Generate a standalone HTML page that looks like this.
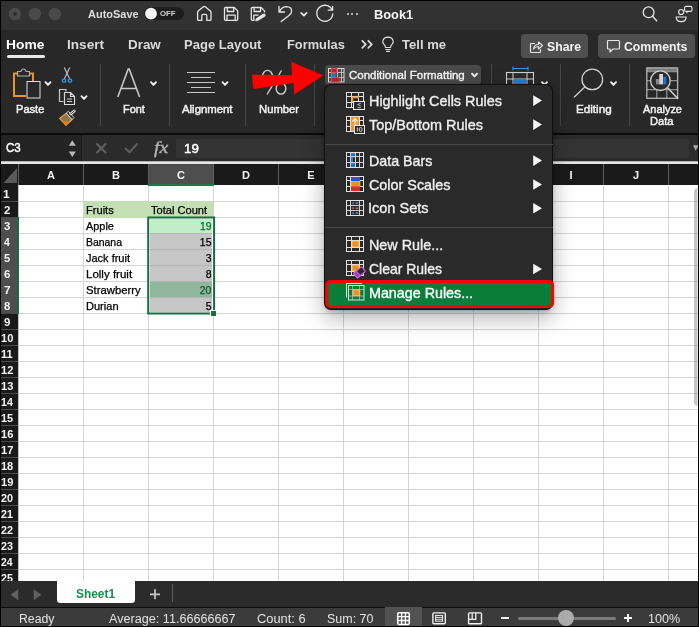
<!DOCTYPE html>
<html>
<head>
<meta charset="utf-8">
<style>
*{box-sizing:border-box;margin:0;padding:0}
html,body{width:699px;height:627px;overflow:hidden;background:#000}
body{font-family:"Liberation Sans",sans-serif;position:relative;font-size:0;line-height:0}
#w{position:absolute;left:0;top:0;width:699px;height:627px;overflow:hidden;background:#000;will-change:transform}
.a{position:absolute;display:block}
.t{position:absolute;white-space:nowrap;line-height:1;display:block}
svg{overflow:visible}
</style>
</head>
<body>
<div id="w">
<div class="a" style="left:1px;top:1px;width:697px;height:625px;background:#282828;"></div>
<div class="a" style="left:1px;top:1px;width:697px;height:29px;background:#323232;"></div>
<svg class="a" style="left:7px;top:6px" width="58" height="16" viewBox="7 6 58 16"><circle cx="15" cy="14" r="6.200" fill="#4a4a4a"/><circle cx="34.900" cy="14" r="6.200" fill="#4a4a4a"/><circle cx="54.900" cy="14" r="6.200" fill="#4a4a4a"/><circle cx="15" cy="14" r="1.800" fill="#2a2a2a"/></svg>
<div class="t" style="left:87.73px;top:8px;line-height:12px;font-size:11px;color:#dedede;font-weight:bold;transform:scaleX(0.9979);transform-origin:0 0;">AutoSave</div>
<svg class="a" style="left:143px;top:6px" width="42" height="15" viewBox="143 6 42 15"><rect x="144.200" y="7.300" width="39.800" height="12.600" rx="6.300" fill="#1d1d1d"/><circle cx="151" cy="13.600" r="5.900" fill="#f2f2f2"/></svg>
<div class="t" style="left:160.19px;top:9px;line-height:9px;font-size:8px;color:#d2d2d2;font-weight:bold;transform:scaleX(0.9740);transform-origin:0 0;">OFF</div>
<svg class="a" style="left:195px;top:4px" width="19" height="19" viewBox="195 4 19 19"><path d="M197.600 12.300 Q197.600 11.600 198.200 11.100 L203.400 6.700 Q204.300 6 205.200 6.700 L210.400 11.100 Q211 11.600 211 12.300 V19.400 Q211 20.400 210 20.400 H206.800 V15.800 Q206.800 14.400 205.400 14.400 H203.200 Q201.800 14.400 201.800 15.800 V20.400 H198.600 Q197.600 20.400 197.600 19.400 Z" fill="none" stroke="#e6e6e6" stroke-width="1.300" stroke-linejoin="round"/></svg>
<svg class="a" style="left:222px;top:5px" width="18" height="18" viewBox="222 5 18 18"><path d="M224.500 8.500 Q224.500 7.500 225.500 7.500 H234.300 L237.700 10.900 V19.300 Q237.700 20.300 236.700 20.300 H225.500 Q224.500 20.300 224.500 19.300 Z M227.300 7.500 V11.500 H233.700 V7.500 M227 20.300 V15.200 H235.200 V20.300" fill="none" stroke="#e6e6e6" stroke-width="1.300" stroke-linejoin="round"/></svg>
<svg class="a" style="left:249px;top:5px" width="20" height="19" viewBox="249 5 20 19"><path d="M256.500 20.300 H252.300 Q251.300 20.300 251.300 19.300 V8.500 Q251.300 7.500 252.300 7.500 H261.100 L264.500 10.900 V12.500 M254.100 7.500 V11.500 H260.500 V7.500 M253.800 20.300 V15.200 H258.500" fill="none" stroke="#e6e6e6" stroke-width="1.300" stroke-linejoin="round"/><path d="M254.600 21.600 L255.600 18.300 L262.800 13.400 Q264.600 12.600 265.800 14.200 Q266.600 15.800 265 17 L258 21.200 Z" fill="#e6e6e6" stroke="#323232" stroke-width="0.800"/></svg>
<svg class="a" style="left:276px;top:4px" width="19" height="20" viewBox="276 4 19 20"><path d="M279 6.500 V12 H284.500 M279.400 11.600 Q282 6.600 286.500 6.600 Q291.600 6.800 291.600 11 Q291.600 13.500 289 15.500 L281.200 21.500" fill="none" stroke="#e6e6e6" stroke-width="1.300" stroke-linecap="round" stroke-linejoin="round"/></svg>
<svg class="a" style="left:299px;top:10px" width="10" height="8" viewBox="299 10 10 8"><path d="M301.200 12.800 L303.900 15.600 L306.600 12.800" fill="none" stroke="#e6e6e6" stroke-width="1.700" stroke-linecap="round" stroke-linejoin="round"/></svg>
<svg class="a" style="left:315px;top:4px" width="20" height="20" viewBox="315 4 20 20"><path d="M332.600 6.500 V10.200 H328.200 M332.100 9.900 A8 8 0 1 0 332.800 14" fill="none" stroke="#e6e6e6" stroke-width="1.300" stroke-linecap="round" stroke-linejoin="round"/></svg>
<div class="a" style="left:346.5px;top:13.2px;width:2px;height:2px;background:#d8d8d8;border-radius:50%"></div>
<div class="a" style="left:351px;top:13.2px;width:2px;height:2px;background:#d8d8d8;border-radius:50%"></div>
<div class="a" style="left:355.5px;top:13.2px;width:2px;height:2px;background:#d8d8d8;border-radius:50%"></div>
<div class="t" style="left:373.67px;top:8px;line-height:14px;font-size:12.3px;color:#f4f4f4;font-weight:bold;transform:scaleX(1.0420);transform-origin:0 0;">Book1</div>
<svg class="a" style="left:641px;top:4px" width="18" height="19" viewBox="641 4 18 19"><circle cx="648.600" cy="12.300" r="5.400" fill="none" stroke="#e6e6e6" stroke-width="1.300"/><path d="M652.500 16.300 L656.700 20.700" stroke="#e6e6e6" stroke-width="1.400" stroke-linecap="round"/></svg>
<svg class="a" style="left:674px;top:4px" width="20" height="20" viewBox="674 4 20 20"><circle cx="681.100" cy="12" r="2.500" fill="none" stroke="#e6e6e6" stroke-width="1.200"/><path d="M676.200 17 H686.100 Q686.100 21.700 681.150 21.700 Q676.200 21.700 676.200 17 Z" fill="none" stroke="#e6e6e6" stroke-width="1.200" stroke-linejoin="round"/><rect x="684.600" y="6.400" width="7.400" height="5" rx="1.500" fill="none" stroke="#e6e6e6" stroke-width="1.100"/><path d="M686.300 11.400 L686.300 13.600 L688.800 11.400 Z" fill="#e6e6e6"/></svg>
<div class="t" style="left:6.10px;top:37px;line-height:15px;font-size:13px;color:#ffffff;font-weight:bold;transform:scaleX(1.0620);transform-origin:0 0;">Home</div>
<div class="a" style="left:7px;top:55px;width:37.5px;height:3px;background:#e8e8e8;border-radius:1.5px"></div>
<div class="t" style="left:67.12px;top:37px;line-height:15px;font-size:13px;color:#dadada;font-weight:bold;transform:scaleX(1.0450);transform-origin:0 0;">Insert</div>
<div class="t" style="left:128.13px;top:37px;line-height:15px;font-size:13px;color:#dadada;font-weight:bold;transform:scaleX(1.0321);transform-origin:0 0;">Draw</div>
<div class="t" style="left:184.15px;top:37px;line-height:15px;font-size:13px;color:#dadada;font-weight:bold;transform:scaleX(1.0016);transform-origin:0 0;">Page Layout</div>
<div class="t" style="left:286.67px;top:37px;line-height:15px;font-size:13px;color:#dadada;font-weight:bold;transform:scaleX(0.9878);transform-origin:0 0;">Formulas</div>
<svg class="a" style="left:360px;top:38px" width="15" height="13" viewBox="360 38 15 13"><path d="M362.300 40.800 L365.800 44.300 L362.300 47.800 M368.300 40.800 L371.800 44.300 L368.300 47.800" fill="none" stroke="#dadada" stroke-width="1.800" stroke-linecap="round" stroke-linejoin="round"/></svg>
<svg class="a" style="left:381px;top:36px;" width="14" height="17" viewBox="0 0 14 17"><path d="M4.5 11.5 Q4.5 10 3.2 8.6 Q1.6 7 1.8 5.5 Q2.3 1.3 7 1.2 Q11.700 1.3 12.2 5.5 Q12.4 7 10.8 8.6 Q9.5 10 9.5 11.500 Z M4.800 13.500 H9.200 M5.500 15.300 H8.500" fill="none" stroke="#dadada" stroke-width="1.2" stroke-linecap="round" stroke-linejoin="round"/></svg>
<div class="t" style="left:402.37px;top:37px;line-height:15px;font-size:13px;color:#dadada;font-weight:bold;transform:scaleX(1.0049);transform-origin:0 0;">Tell me</div>
<div class="a" style="left:521px;top:33.5px;width:67px;height:24.5px;background:#4f4f4f;border-radius:4px"></div>
<div class="a" style="left:598px;top:33.5px;width:96.5px;height:24.5px;background:#4f4f4f;border-radius:4px"></div>
<svg class="a" style="left:529px;top:39px;" width="15" height="15" viewBox="0 0 15 15"><path d="M5.5 4.500 H2.5 Q1.5 4.500 1.5 5.500 V12.500 Q1.500 13.500 2.500 13.500 H10.500 Q11.500 13.500 11.500 12.500 V10.500" fill="none" stroke="#e6e6e6" stroke-width="1.200" stroke-linecap="round"/><path d="M4.500 10 Q5 5.500 9.500 5.500 V3 L13.500 6.500 L9.500 10 V7.500 Q6.500 7.500 4.500 10 Z" fill="none" stroke="#e6e6e6" stroke-width="1.1" stroke-linejoin="round"/></svg>
<div class="t" style="left:547.19px;top:40px;line-height:14px;font-size:12.5px;color:#f2f2f2;font-weight:bold;transform:scaleX(0.9835);transform-origin:0 0;">Share</div>
<svg class="a" style="left:606px;top:39px;" width="15" height="15" viewBox="0 0 15 15"><path d="M2.500 1.500 H12.500 Q13.500 1.500 13.500 2.500 V9 Q13.500 10 12.500 10 H7 L4 13 V10 H2.500 Q1.500 10 1.500 9 V2.500 Q1.500 1.500 2.500 1.500 Z" fill="none" stroke="#e6e6e6" stroke-width="1.200" stroke-linejoin="round"/></svg>
<div class="t" style="left:624.01px;top:40px;line-height:14px;font-size:12.5px;color:#f2f2f2;font-weight:bold;transform:scaleX(0.9823);transform-origin:0 0;">Comments</div>
<div class="a" style="left:100px;top:64px;width:1px;height:62px;background:#454545;"></div>
<div class="a" style="left:169px;top:64px;width:1px;height:62px;background:#454545;"></div>
<div class="a" style="left:245px;top:64px;width:1px;height:62px;background:#454545;"></div>
<div class="a" style="left:314px;top:64px;width:1px;height:62px;background:#454545;"></div>
<div class="a" style="left:491px;top:64px;width:1px;height:62px;background:#454545;"></div>
<div class="a" style="left:560px;top:64px;width:1px;height:62px;background:#454545;"></div>
<div class="a" style="left:629px;top:64px;width:1px;height:62px;background:#454545;"></div>
<svg class="a" style="left:11px;top:67px;" width="32" height="33" viewBox="0 0 32 33"><path d="M6.500 6.500 H3 V29 H15" fill="none" stroke="#e8922e" stroke-width="2"/><path d="M18.500 6.500 H22 V14" fill="none" stroke="#e8922e" stroke-width="2"/><path d="M6.500 9 V4.500 H10 Q10.500 2 12.500 2 Q14.500 2 15 4.500 H18.500 V9 Z" fill="#282828" stroke="#b0b0b0" stroke-width="1.200" stroke-linejoin="round"/><rect x="16" y="14.500" width="13" height="16.500" fill="#282828" stroke="#e0e0e0" stroke-width="1"/></svg>
<svg class="a" style="left:43px;top:80px" width="11" height="9" viewBox="43 80 11 9"><path d="M45.5 82.2 L48 84.9 L50.5 82.2" fill="none" stroke="#f0f0f0" stroke-width="1.900" stroke-linecap="round" stroke-linejoin="round"/></svg>
<div class="t" style="left:15.61px;top:103px;line-height:12px;font-size:11px;color:#f2f2f2;-webkit-text-stroke:0.45px #f2f2f2;transform:scaleX(1.0080);transform-origin:0 0;">Paste</div>
<svg class="a" style="left:60px;top:66px;" width="14" height="18" viewBox="0 0 14 18"><path d="M4.300 1.500 L9.600 12.800 M9.700 1.500 L4.400 12.800" stroke="#c4c4c4" stroke-width="1.100" fill="none" stroke-linecap="butt"/><rect x="2.300" y="13.200" width="3.400" height="3" rx="1.200" fill="none" stroke="#2a9df4" stroke-width="1.200"/><rect x="8.300" y="13.200" width="3.400" height="3" rx="1.200" fill="none" stroke="#2a9df4" stroke-width="1.200"/></svg>
<svg class="a" style="left:58px;top:88px;" width="18" height="18" viewBox="0 0 18 18"><path d="M5.500 13.500 H1.500 V1.500 H8 V3.500" fill="none" stroke="#c8c8c8" stroke-width="1.200"/><path d="M6.500 4.500 H12.500 L16.500 8.500 V16.500 H6.500 Z M12.500 4.500 V8.500 H16.500" fill="#282828" stroke="#d8d8d8" stroke-width="1.200" stroke-linejoin="round"/><path d="M9 11 H14 M9 13.500 H14" stroke="#d8d8d8" stroke-width="1.100"/></svg>
<svg class="a" style="left:79px;top:94px" width="11" height="9" viewBox="79 94 11 9"><path d="M81.5 96.2 L84 98.9 L86.5 96.2" fill="none" stroke="#f0f0f0" stroke-width="1.900" stroke-linecap="round" stroke-linejoin="round"/></svg>
<svg class="a" style="left:57px;top:108px" width="21" height="20" viewBox="57 108 21 20"><path d="M59.600 118.400 L66.300 113.100 L72.100 119.500 L66 125.400 Z" fill="#eab566" fill-opacity="0.550" stroke="#f2a43a" stroke-width="1.100" stroke-linejoin="round"/><path d="M62.600 121.300 L69.800 121.800 L66 125.400 Z" fill="#e8781e"/><path d="M66.300 113.100 L68.300 111.300 L74 117.600 L72.100 119.500 Z" fill="#2b2b2b" stroke="#dcdcdc" stroke-width="1" stroke-linejoin="round"/><path d="M70.800 113.800 L74.300 111" stroke="#e6e6e6" stroke-width="2.800" stroke-linecap="round"/><path d="M70.800 113.800 L74.300 111" stroke="#2b2b2b" stroke-width="0.900" stroke-linecap="round"/></svg>
<svg class="a" style="left:115px;top:67px" width="28" height="32" viewBox="115 67 28 32"><path d="M117.800 97 L128.200 69 H129.200 L139.600 97 M121.300 88.500 H136.100" fill="none" stroke="#c8c8c8" stroke-width="1.600" stroke-linejoin="miter"/></svg>
<svg class="a" style="left:148px;top:80px" width="11" height="9" viewBox="148 80 11 9"><path d="M151.0 82.2 L153.5 84.9 L156.0 82.2" fill="none" stroke="#f0f0f0" stroke-width="1.900" stroke-linecap="round" stroke-linejoin="round"/></svg>
<div class="t" style="left:123.12px;top:103px;line-height:12px;font-size:11px;color:#f2f2f2;-webkit-text-stroke:0.45px #f2f2f2;transform:scaleX(0.9943);transform-origin:0 0;">Font</div>
<div class="a" style="left:187px;top:71.9px;width:28px;height:1.2px;background:#c8c8c8;"></div>
<div class="a" style="left:191px;top:76.9px;width:20px;height:1.2px;background:#c8c8c8;"></div>
<div class="a" style="left:187px;top:81.9px;width:28px;height:1.2px;background:#c8c8c8;"></div>
<div class="a" style="left:191px;top:86.9px;width:20px;height:1.2px;background:#c8c8c8;"></div>
<div class="a" style="left:187px;top:91.9px;width:28px;height:1.2px;background:#c8c8c8;"></div>
<svg class="a" style="left:220px;top:80px" width="11" height="9" viewBox="220 80 11 9"><path d="M222.5 82.2 L225 84.9 L227.5 82.2" fill="none" stroke="#f0f0f0" stroke-width="1.900" stroke-linecap="round" stroke-linejoin="round"/></svg>
<div class="t" style="left:182.00px;top:103px;line-height:12px;font-size:11px;color:#f2f2f2;-webkit-text-stroke:0.45px #f2f2f2;transform:scaleX(1.0328);transform-origin:0 0;">Alignment</div>
<svg class="a" style="left:261px;top:69px;" width="27" height="27" viewBox="0 0 27 27"><ellipse cx="6.500" cy="7" rx="4.800" ry="5.600" fill="none" stroke="#cfcfcf" stroke-width="1.400"/><ellipse cx="20" cy="19.500" rx="4.800" ry="5.600" fill="none" stroke="#cfcfcf" stroke-width="1.400"/><path d="M20.500 1.500 L6 25.500" stroke="#cfcfcf" stroke-width="1.400"/></svg>
<div class="t" style="left:258.60px;top:103px;line-height:12px;font-size:11px;color:#f2f2f2;-webkit-text-stroke:0.45px #f2f2f2;transform:scaleX(1.0232);transform-origin:0 0;">Number</div>
<svg class="a" style="left:245px;top:58px;" width="85" height="42" viewBox="0 0 85 42"><path d="M6.800 16.700 L47 17.200 L46.400 3.700 L78.400 17.500 L49.200 36.600 L48.500 25 L8.400 31 Z" fill="#ff0000"/></svg>
<div class="a" style="left:325px;top:65px;width:156px;height:20px;background:#4a4a4a;border-radius:4px"></div>
<svg class="a" style="left:326px;top:66px" width="21" height="19" viewBox="326 66 21 19"><path d="M331.500 68.500 V82 M337.500 68.500 V82 M341.500 68.500 V82 M328.500 72.500 H344 M328.500 77.500 H344" stroke="#bdbdbd" stroke-width="1" fill="none"/><rect x="328.500" y="68.500" width="15.500" height="13.500" fill="none" stroke="#dcdcdc" stroke-width="1"/><rect x="331.500" y="68.500" width="5.500" height="4" fill="#b3262c" stroke="#e3484f" stroke-width="0.800"/><rect x="331.500" y="73.200" width="3.500" height="3.800" fill="#1a74c4" stroke="#3aa0ea" stroke-width="0.700"/><rect x="331.500" y="77.500" width="7.500" height="4.500" fill="#b3262c" stroke="#e3484f" stroke-width="0.800"/></svg>
<div class="t" style="left:349.42px;top:69px;line-height:12px;font-size:11px;color:#f6f6f6;-webkit-text-stroke:0.35px #f6f6f6;transform:scaleX(1.0461);transform-origin:0 0;">Conditional Formatting</div>
<svg class="a" style="left:469px;top:71px" width="11" height="9" viewBox="469 71 11 9"><path d="M472.0 73.7 L474.5 76.4 L477.0 73.7" fill="none" stroke="#f0f0f0" stroke-width="1.900" stroke-linecap="round" stroke-linejoin="round"/></svg>
<svg class="a" style="left:505px;top:66px;" width="30" height="22" viewBox="0 0 30 22"><path d="M8 2.500 H23 M8 0.500 V4.500 M23 0.500 V4.500" stroke="#3a96dd" stroke-width="1.100" fill="none"/><rect x="1.500" y="6.500" width="27" height="20" fill="none" stroke="#d0d0d0" stroke-width="1.100"/><path d="M8 6.500 V26 M22 6.500 V26 M1.500 13 H28.500" stroke="#d0d0d0" stroke-width="1"/><rect x="8.500" y="13.500" width="13" height="12" fill="#1f7fd6"/></svg>
<svg class="a" style="left:539px;top:80px" width="11" height="9" viewBox="539 80 11 9"><path d="M542.0 82.2 L544.5 84.9 L547.0 82.2" fill="none" stroke="#f0f0f0" stroke-width="1.900" stroke-linecap="round" stroke-linejoin="round"/></svg>
<svg class="a" style="left:572px;top:66px;" width="34" height="34" viewBox="0 0 34 34"><circle cx="20.300" cy="13.400" r="10.300" fill="none" stroke="#cfcfcf" stroke-width="1.300"/><path d="M13 20.700 L2.300 31" stroke="#cfcfcf" stroke-width="1.300" stroke-linecap="round"/></svg>
<svg class="a" style="left:608px;top:80px" width="11" height="9" viewBox="608 80 11 9"><path d="M611.0 82.2 L613.5 84.9 L616.0 82.2" fill="none" stroke="#f0f0f0" stroke-width="1.900" stroke-linecap="round" stroke-linejoin="round"/></svg>
<div class="t" style="left:576.07px;top:103px;line-height:12px;font-size:11px;color:#f2f2f2;-webkit-text-stroke:0.45px #f2f2f2;transform:scaleX(1.0603);transform-origin:0 0;">Editing</div>
<svg class="a" style="left:644px;top:65px" width="36" height="36" viewBox="644 65 36 36"><rect x="646.800" y="67.900" width="30.800" height="3.600" fill="#7a7a7a"/><path d="M646.800 71.500 H677.600 M646.800 80.700 H677.600 M646.800 89.600 H677.600 M656.800 71.500 V98.300 M666.800 71.500 V98.300" stroke="#8e8e8e" stroke-width="1.300" fill="none"/><rect x="646.800" y="67.900" width="30.800" height="30.400" fill="none" stroke="#b4b4b4" stroke-width="1.300"/><circle cx="660.400" cy="80.700" r="9.800" fill="#2b2b2b" stroke="#d0d0d0" stroke-width="1.300"/><rect x="655.900" y="79" width="3" height="5.400" fill="#8a8a8a"/><rect x="659.200" y="74" width="3.800" height="10.400" fill="#d4d4d4"/><rect x="663.300" y="76.700" width="3" height="7.700" fill="#1a78d0"/><path d="M667.500 87.800 L677.600 98.300" stroke="#d0d0d0" stroke-width="1.600" stroke-linecap="round"/></svg>
<div class="t" style="left:642.50px;top:103px;line-height:12px;font-size:11px;color:#f2f2f2;-webkit-text-stroke:0.45px #f2f2f2;transform:scaleX(0.9957);transform-origin:0 0;">Analyze</div>
<div class="t" style="left:650.12px;top:115px;line-height:12px;font-size:11px;color:#f2f2f2;-webkit-text-stroke:0.45px #f2f2f2;transform:scaleX(1.0051);transform-origin:0 0;">Data</div>
<div class="a" style="left:1px;top:133px;width:697px;height:2.3px;background:#0a0a0a;"></div>
<div class="a" style="left:1px;top:135.3px;width:697px;height:26px;background:#2b2b2b;"></div>
<div class="a" style="left:1px;top:135.3px;width:79.5px;height:26px;background:#232323;"></div>
<div class="a" style="left:80.5px;top:135.3px;width:1px;height:26px;background:#1c1c1c;"></div>
<div class="t" style="left:5.72px;top:140px;line-height:15px;font-size:13px;color:#ffffff;-webkit-text-stroke:0.45px #ffffff;transform:scaleX(0.8893);transform-origin:0 0;">C3</div>
<svg class="a" style="left:67px;top:138px" width="11" height="21" viewBox="67 138 11 21"><path d="M72.300 140.200 L75.800 145.800 H68.800 Z M72.300 157 L75.800 151.400 H68.800 Z" fill="#b8b8b8"/></svg>
<svg class="a" style="left:95px;top:142px" width="13" height="13" viewBox="95 142 13 13"><path d="M97 144 L105.500 152.500 M105.500 144 L97 152.500" stroke="#626262" stroke-width="2" stroke-linecap="round"/></svg>
<svg class="a" style="left:123px;top:142px" width="17" height="13" viewBox="123 142 17 13"><path d="M125.500 148.500 L129.500 152.300 L137 144" fill="none" stroke="#5e5e5e" stroke-width="2" stroke-linecap="round" stroke-linejoin="round"/></svg>
<div class="t" style="left:154.200px;top:138px;line-height:20px;font-size:17px;font-style:italic;color:#b4b4b4;-webkit-text-stroke:0.350px #b4b4b4;font-family:'Liberation Serif',serif;transform:scaleX(1.16);transform-origin:0 0">fx</div>
<div class="a" style="left:176px;top:139px;width:513px;height:19px;background:#343434;border-radius:2px"></div>
<div class="t" style="left:183.80px;top:141px;line-height:15px;font-size:13px;color:#ffffff;-webkit-text-stroke:0.45px #ffffff;transform:scaleX(1.0256);transform-origin:0 0;">19</div>
<svg class="a" style="left:692px;top:144px" width="7" height="8" viewBox="692 144 7 8"><path d="M693 145.200 H698.500 L695.700 150.700 Z" fill="#a8a8a8"/></svg>
<div class="a" style="left:1px;top:161px;width:697px;height:1px;background:#b4b4b4;"></div>
<div class="a" style="left:1px;top:162px;width:697px;height:2px;background:#e6e6e6;"></div>
<div class="a" style="left:1px;top:164px;width:697px;height:417px;background:#ffffff;"></div>
<div class="a" style="left:1px;top:163.7px;width:697px;height:21.3px;background:#1a1a1a;"></div>
<div class="a" style="left:1px;top:185px;width:17px;height:396px;background:#1a1a1a;"></div>
<div class="a" style="left:18px;top:185px;width:1px;height:396px;background:#c4c4c4;"></div>
<div class="a" style="left:149px;top:163.7px;width:64px;height:21.3px;background:#4e4e4e;"></div>
<div class="a" style="left:1px;top:217px;width:17px;height:97px;background:#4e4e4e;"></div>
<svg class="a" style="left:2px;top:166px;" width="17" height="19" viewBox="0 0 17 19"><path d="M15 2 V17 H1.500 Z" fill="#5a5a5a"/></svg>
<div class="a" style="left:19px;top:186px;width:679px;height:395px;background-image:repeating-linear-gradient(to right,transparent 0,transparent 64px,#d4d4d4 64px,#d4d4d4 65px),repeating-linear-gradient(to bottom,transparent 0,transparent 15px,#d4d4d4 15px,#d4d4d4 16px)"></div>
<div class="a" style="left:18px;top:163.7px;width:1px;height:21.3px;background:#5e5e5e;"></div>
<div class="a" style="left:83px;top:163.7px;width:1px;height:21.3px;background:#5e5e5e;"></div>
<div class="a" style="left:148px;top:163.7px;width:1px;height:21.3px;background:#5e5e5e;"></div>
<div class="a" style="left:213px;top:163.7px;width:1px;height:21.3px;background:#5e5e5e;"></div>
<div class="a" style="left:278px;top:163.7px;width:1px;height:21.3px;background:#5e5e5e;"></div>
<div class="a" style="left:343px;top:163.7px;width:1px;height:21.3px;background:#5e5e5e;"></div>
<div class="a" style="left:408px;top:163.7px;width:1px;height:21.3px;background:#5e5e5e;"></div>
<div class="a" style="left:473px;top:163.7px;width:1px;height:21.3px;background:#5e5e5e;"></div>
<div class="a" style="left:538px;top:163.7px;width:1px;height:21.3px;background:#5e5e5e;"></div>
<div class="a" style="left:603px;top:163.7px;width:1px;height:21.3px;background:#5e5e5e;"></div>
<div class="a" style="left:668px;top:163.7px;width:1px;height:21.3px;background:#5e5e5e;"></div>
<div class="a" style="left:1px;top:201px;width:17px;height:1px;background:#4a4a4a;"></div>
<div class="a" style="left:1px;top:217px;width:17px;height:1px;background:#4a4a4a;"></div>
<div class="a" style="left:1px;top:313px;width:17px;height:1px;background:#4a4a4a;"></div>
<div class="a" style="left:1px;top:329px;width:17px;height:1px;background:#4a4a4a;"></div>
<div class="a" style="left:1px;top:345px;width:17px;height:1px;background:#4a4a4a;"></div>
<div class="a" style="left:1px;top:361px;width:17px;height:1px;background:#4a4a4a;"></div>
<div class="a" style="left:1px;top:377px;width:17px;height:1px;background:#4a4a4a;"></div>
<div class="a" style="left:1px;top:393px;width:17px;height:1px;background:#4a4a4a;"></div>
<div class="a" style="left:1px;top:409px;width:17px;height:1px;background:#4a4a4a;"></div>
<div class="a" style="left:1px;top:425px;width:17px;height:1px;background:#4a4a4a;"></div>
<div class="a" style="left:1px;top:441px;width:17px;height:1px;background:#4a4a4a;"></div>
<div class="a" style="left:1px;top:457px;width:17px;height:1px;background:#4a4a4a;"></div>
<div class="a" style="left:1px;top:473px;width:17px;height:1px;background:#4a4a4a;"></div>
<div class="a" style="left:1px;top:489px;width:17px;height:1px;background:#4a4a4a;"></div>
<div class="a" style="left:1px;top:505px;width:17px;height:1px;background:#4a4a4a;"></div>
<div class="a" style="left:1px;top:521px;width:17px;height:1px;background:#4a4a4a;"></div>
<div class="a" style="left:1px;top:537px;width:17px;height:1px;background:#4a4a4a;"></div>
<div class="a" style="left:1px;top:553px;width:17px;height:1px;background:#4a4a4a;"></div>
<div class="a" style="left:1px;top:569px;width:17px;height:1px;background:#4a4a4a;"></div>
<div class="a" style="left:1px;top:585px;width:17px;height:1px;background:#4a4a4a;"></div>
<div class="a" style="left:17px;top:217px;width:2px;height:97px;background:#107040;"></div>
<div class="a" style="left:148px;top:184px;width:66px;height:1.5px;background:#1c7a46;"></div>
<div class="t" style="left:47.03px;top:169px;line-height:12px;font-size:11px;color:#f4f4f4;font-weight:bold;">A</div>
<div class="t" style="left:112.03px;top:169px;line-height:12px;font-size:11px;color:#f4f4f4;font-weight:bold;">B</div>
<div class="t" style="left:177.03px;top:169px;line-height:12px;font-size:11px;color:#f4f4f4;font-weight:bold;">C</div>
<div class="t" style="left:242.03px;top:169px;line-height:12px;font-size:11px;color:#f4f4f4;font-weight:bold;">D</div>
<div class="t" style="left:307.33px;top:169px;line-height:12px;font-size:11px;color:#f4f4f4;font-weight:bold;">E</div>
<div class="t" style="left:372.64px;top:169px;line-height:12px;font-size:11px;color:#f4f4f4;font-weight:bold;">F</div>
<div class="t" style="left:436.72px;top:169px;line-height:12px;font-size:11px;color:#f4f4f4;font-weight:bold;">G</div>
<div class="t" style="left:502.03px;top:169px;line-height:12px;font-size:11px;color:#f4f4f4;font-weight:bold;">H</div>
<div class="t" style="left:569.47px;top:169px;line-height:12px;font-size:11px;color:#f4f4f4;font-weight:bold;">I</div>
<div class="t" style="left:632.94px;top:169px;line-height:12px;font-size:11px;color:#f4f4f4;font-weight:bold;">J</div>
<div class="t" style="left:3.37px;top:188px;line-height:12px;font-size:11px;color:#f4f4f4;font-weight:bold;transform:scaleX(1.0887);transform-origin:0 0;">1</div>
<div class="t" style="left:3.74px;top:204px;line-height:12px;font-size:11px;color:#f4f4f4;font-weight:bold;transform:scaleX(1.0442);transform-origin:0 0;">2</div>
<div class="t" style="left:3.86px;top:220px;line-height:12px;font-size:11px;color:#f4f4f4;font-weight:bold;transform:scaleX(1.0234);transform-origin:0 0;">3</div>
<div class="t" style="left:3.93px;top:236px;line-height:12px;font-size:11px;color:#f4f4f4;font-weight:bold;transform:scaleX(0.9476);transform-origin:0 0;">4</div>
<div class="t" style="left:3.75px;top:252px;line-height:12px;font-size:11px;color:#f4f4f4;font-weight:bold;transform:scaleX(1.0234);transform-origin:0 0;">5</div>
<div class="t" style="left:3.68px;top:268px;line-height:12px;font-size:11px;color:#f4f4f4;font-weight:bold;transform:scaleX(1.0550);transform-origin:0 0;">6</div>
<div class="t" style="left:3.61px;top:284px;line-height:12px;font-size:11px;color:#f4f4f4;font-weight:bold;transform:scaleX(1.0772);transform-origin:0 0;">7</div>
<div class="t" style="left:3.75px;top:300px;line-height:12px;font-size:11px;color:#f4f4f4;font-weight:bold;transform:scaleX(1.0234);transform-origin:0 0;">8</div>
<div class="t" style="left:3.74px;top:316px;line-height:12px;font-size:11px;color:#f4f4f4;font-weight:bold;transform:scaleX(1.0442);transform-origin:0 0;">9</div>
<div class="t" style="left:0.61px;top:332px;line-height:12px;font-size:11px;color:#f4f4f4;font-weight:bold;transform:scaleX(1.0082);transform-origin:0 0;">10</div>
<div class="t" style="left:0.89px;top:348px;line-height:12px;font-size:11px;color:#f4f4f4;font-weight:bold;transform:scaleX(1.0027);transform-origin:0 0;">11</div>
<div class="t" style="left:0.61px;top:364px;line-height:12px;font-size:11px;color:#f4f4f4;font-weight:bold;transform:scaleX(1.0082);transform-origin:0 0;">12</div>
<div class="t" style="left:0.61px;top:380px;line-height:12px;font-size:11px;color:#f4f4f4;font-weight:bold;transform:scaleX(1.0082);transform-origin:0 0;">13</div>
<div class="t" style="left:0.63px;top:396px;line-height:12px;font-size:11px;color:#f4f4f4;font-weight:bold;transform:scaleX(0.9746);transform-origin:0 0;">14</div>
<div class="t" style="left:0.61px;top:412px;line-height:12px;font-size:11px;color:#f4f4f4;font-weight:bold;transform:scaleX(0.9984);transform-origin:0 0;">15</div>
<div class="t" style="left:0.61px;top:428px;line-height:12px;font-size:11px;color:#f4f4f4;font-weight:bold;transform:scaleX(1.0082);transform-origin:0 0;">16</div>
<div class="t" style="left:0.60px;top:444px;line-height:12px;font-size:11px;color:#f4f4f4;font-weight:bold;transform:scaleX(1.0132);transform-origin:0 0;">17</div>
<div class="t" style="left:0.61px;top:460px;line-height:12px;font-size:11px;color:#f4f4f4;font-weight:bold;transform:scaleX(0.9984);transform-origin:0 0;">18</div>
<div class="t" style="left:0.61px;top:476px;line-height:12px;font-size:11px;color:#f4f4f4;font-weight:bold;transform:scaleX(1.0082);transform-origin:0 0;">19</div>
<div class="t" style="left:0.95px;top:492px;line-height:12px;font-size:11px;color:#f4f4f4;font-weight:bold;transform:scaleX(0.9793);transform-origin:0 0;">20</div>
<div class="t" style="left:0.95px;top:508px;line-height:12px;font-size:11px;color:#f4f4f4;font-weight:bold;transform:scaleX(0.9700);transform-origin:0 0;">21</div>
<div class="t" style="left:0.95px;top:524px;line-height:12px;font-size:11px;color:#f4f4f4;font-weight:bold;transform:scaleX(0.9793);transform-origin:0 0;">22</div>
<div class="t" style="left:0.95px;top:540px;line-height:12px;font-size:11px;color:#f4f4f4;font-weight:bold;transform:scaleX(0.9793);transform-origin:0 0;">23</div>
<div class="t" style="left:0.96px;top:556px;line-height:12px;font-size:11px;color:#f4f4f4;font-weight:bold;transform:scaleX(0.9476);transform-origin:0 0;">24</div>
<div class="t" style="left:0.95px;top:572px;line-height:12px;font-size:11px;color:#f4f4f4;font-weight:bold;transform:scaleX(0.9700);transform-origin:0 0;">25</div>
<div class="a" style="left:83px;top:201px;width:131px;height:16.5px;background:#c5dfb4;"></div>
<div class="a" style="left:149px;top:217.5px;width:64.5px;height:15.5px;background:#c1edc9;"></div>
<div class="a" style="left:149px;top:233.5px;width:64.5px;height:47.5px;background:#c6c6c6;"></div>
<div class="a" style="left:149px;top:281.5px;width:64.5px;height:15.5px;background:#90b79d;"></div>
<div class="a" style="left:149px;top:297.5px;width:64.5px;height:15.5px;background:#c6c6c6;"></div>
<div class="a" style="left:149px;top:232.8px;width:64.5px;height:1px;background:#b4b4b4;"></div>
<div class="a" style="left:149px;top:248.8px;width:64.5px;height:1px;background:#b4b4b4;"></div>
<div class="a" style="left:149px;top:264.8px;width:64.5px;height:1px;background:#b4b4b4;"></div>
<div class="a" style="left:149px;top:280.8px;width:64.5px;height:1px;background:#b4b4b4;"></div>
<div class="a" style="left:149px;top:296.8px;width:64.5px;height:1px;background:#b4b4b4;"></div>
<div class="t" style="left:85.81px;top:205px;line-height:11px;font-size:10.4px;color:#000;-webkit-text-stroke:0.25px #000;transform:scaleX(1.0684);transform-origin:0 0;">Fruits</div>
<div class="t" style="left:151.08px;top:205px;line-height:11px;font-size:10.4px;color:#000;-webkit-text-stroke:0.25px #000;transform:scaleX(1.0675);transform-origin:0 0;">Total Count</div>
<div class="t" style="left:86.20px;top:221px;line-height:11px;font-size:10.4px;color:#000;-webkit-text-stroke:0.25px #000;transform:scaleX(1.0514);transform-origin:0 0;">Apple</div>
<div class="t" style="left:85.86px;top:237px;line-height:11px;font-size:10.4px;color:#000;-webkit-text-stroke:0.25px #000;transform:scaleX(1.0043);transform-origin:0 0;">Banana</div>
<div class="t" style="left:85.74px;top:253px;line-height:11px;font-size:10.4px;color:#000;-webkit-text-stroke:0.25px #000;transform:scaleX(1.0568);transform-origin:0 0;">Jack fruit</div>
<div class="t" style="left:85.78px;top:269px;line-height:11px;font-size:10.4px;color:#000;-webkit-text-stroke:0.25px #000;transform:scaleX(1.1087);transform-origin:0 0;">Lolly fruit</div>
<div class="t" style="left:85.69px;top:285px;line-height:11px;font-size:10.4px;color:#000;-webkit-text-stroke:0.25px #000;transform:scaleX(1.0880);transform-origin:0 0;">Strawberry</div>
<div class="t" style="left:85.82px;top:301px;line-height:11px;font-size:10.4px;color:#000;-webkit-text-stroke:0.25px #000;transform:scaleX(1.0627);transform-origin:0 0;">Durian</div>
<div class="t" style="left:199.92px;top:221px;line-height:11px;font-size:10.4px;color:#0b6b2c;-webkit-text-stroke:0.25px #0b6b2c;">19</div>
<div class="t" style="left:199.87px;top:237px;line-height:11px;font-size:10.4px;color:#000;-webkit-text-stroke:0.25px #000;">15</div>
<div class="t" style="left:205.64px;top:253px;line-height:11px;font-size:10.4px;color:#000;-webkit-text-stroke:0.25px #000;">3</div>
<div class="t" style="left:205.64px;top:269px;line-height:11px;font-size:10.4px;color:#000;-webkit-text-stroke:0.25px #000;">8</div>
<div class="t" style="left:199.82px;top:285px;line-height:11px;font-size:10.4px;color:#0a5a24;-webkit-text-stroke:0.25px #0a5a24;">20</div>
<div class="t" style="left:205.64px;top:301px;line-height:11px;font-size:10.4px;color:#000;-webkit-text-stroke:0.25px #000;">5</div>
<svg class="a" style="left:145px;top:214px" width="74" height="104" viewBox="145 214 74 104"><rect x="149.500" y="218.500" width="63" height="94" fill="none" stroke="#ffffff" stroke-width="1"/><rect x="148.200" y="217.500" width="65.900" height="96" fill="none" stroke="#1b6b3f" stroke-width="2"/><rect x="210" y="310" width="6.500" height="6.500" fill="#ffffff"/><rect x="211" y="311" width="5" height="5" fill="#1b6b3f"/></svg>
<svg class="a" style="left:692px;top:186px" width="7" height="222" viewBox="692 186 7 222"><path d="M697.500 188 Q694 188.500 694 192 V402 Q694 405.500 697.500 406 Z" fill="#8c8c8c" fill-opacity="0.500"/></svg>
<div class="a" style="left:1px;top:581px;width:697px;height:26px;background:#2b2b2b;"></div>
<svg class="a" style="left:9px;top:587px" width="11" height="15" viewBox="9 587 11 15"><path d="M18.300 589.300 V600.300 L10.500 594.800 Z" fill="#606060"/></svg>
<svg class="a" style="left:32px;top:587px" width="11" height="15" viewBox="32 587 11 15"><path d="M33.700 589.300 V600.300 L41.500 594.800 Z" fill="#606060"/></svg>
<div class="a" style="left:56.5px;top:581px;width:78px;height:21.5px;background:#ffffff;border-radius:0 0 3.500px 3.500px"></div>
<div class="t" style="left:76.20px;top:587px;line-height:14px;font-size:12px;color:#1c8a50;font-weight:bold;transform:scaleX(0.9933);transform-origin:0 0;">Sheet1</div>
<svg class="a" style="left:148px;top:587px" width="14" height="14" viewBox="148 587 14 14"><path d="M155 589.300 V599.300 M150 594.300 H160" stroke="#c8c8c8" stroke-width="1.700"/></svg>
<div class="a" style="left:172px;top:584px;width:1px;height:18px;background:#5a5a5a;"></div>
<div class="a" style="left:1px;top:606.7px;width:697px;height:1.5px;background:#0c0c0c;"></div>
<div class="a" style="left:1px;top:608px;width:697px;height:18px;background:#3b3b3b;"></div>
<div class="t" style="left:19.02px;top:612px;line-height:14px;font-size:12.3px;color:#e2e2e2;transform:scaleX(0.9982);transform-origin:0 0;">Ready</div>
<div class="t" style="left:109.00px;top:612px;line-height:14px;font-size:12.3px;color:#e2e2e2;transform:scaleX(1.0264);transform-origin:0 0;">Average: 11.66666667</div>
<div class="t" style="left:256.86px;top:612px;line-height:14px;font-size:12.3px;color:#e2e2e2;transform:scaleX(1.0466);transform-origin:0 0;">Count: 6</div>
<div class="t" style="left:326.94px;top:612px;line-height:14px;font-size:12.3px;color:#e2e2e2;transform:scaleX(1.0149);transform-origin:0 0;">Sum: 70</div>
<div class="a" style="left:385px;top:607px;width:37px;height:19px;background:#525252;"></div>
<svg class="a" style="left:395px;top:610px" width="17" height="17" viewBox="395 610 17 17"><rect x="397.700" y="612.800" width="11.600" height="11.600" rx="1.300" fill="none" stroke="#ffffff" stroke-width="1.500"/><path d="M401.600 612.800 V624.400 M405.400 612.800 V624.400 M397.700 616.700 H409.300 M397.700 620.500 H409.300" stroke="#ffffff" stroke-width="1.300" fill="none"/></svg>
<svg class="a" style="left:430px;top:610px" width="18" height="17" viewBox="430 610 18 17"><rect x="432.900" y="612.900" width="12.400" height="10.800" rx="1" fill="none" stroke="#f0f0f0" stroke-width="1.400"/><rect x="435.600" y="615.400" width="7" height="5.800" fill="none" stroke="#f0f0f0" stroke-width="1"/><path d="M436 617.400 H442.400 M436 619.300 H442.400" stroke="#f0f0f0" stroke-width="0.900"/></svg>
<svg class="a" style="left:466px;top:610px" width="18" height="17" viewBox="466 610 18 17"><rect x="468.600" y="612.900" width="12.900" height="10.800" rx="0.800" fill="none" stroke="#f0f0f0" stroke-width="1.400"/><path d="M468.600 619.300 H475.800 V612.900 M472.200 612.900 V619.300" stroke="#f0f0f0" stroke-width="1.300" fill="none"/></svg>
<div class="a" style="left:501px;top:617px;width:8px;height:2.3px;background:#f4f4f4;"></div>
<div class="a" style="left:517.5px;top:617px;width:98.5px;height:3px;background:#7a7a7a;border-radius:1.500px"></div>
<div class="a" style="left:558px;top:609.7px;width:16px;height:16px;background:#ababab;border-radius:50%"></div>
<div class="a" style="left:623.5px;top:617.3px;width:8px;height:2px;background:#f0f0f0;"></div>
<div class="a" style="left:626.5px;top:614.3px;width:2px;height:8px;background:#f0f0f0;"></div>
<div class="t" style="left:647.56px;top:612px;line-height:14px;font-size:12px;color:#e2e2e2;transform:scaleX(1.0476);transform-origin:0 0;">100%</div>
<div class="a" style="left:325px;top:85px;width:227px;height:224px;background:#2a2a2a;border-radius:6px;box-shadow:0 0 0 1px #101010,0 8px 22px 1px rgba(0,0,0,.30),0 2px 5px rgba(0,0,0,.25)"></div>
<div class="a" style="left:325px;top:143.5px;width:227.5px;height:1.5px;background:#484848;"></div>
<div class="a" style="left:325px;top:226.5px;width:227.5px;height:1.5px;background:#484848;"></div>
<svg class="a" style="left:324px;top:278px" width="231" height="32" viewBox="324 278 231 32"><rect x="326.800" y="281.500" width="225.800" height="25" rx="3.600" fill="#0a7d3a" stroke="#fb0000" stroke-width="3"/></svg>
<div class="t" style="left:368.55px;top:93px;line-height:16px;font-size:14.2px;color:#efefef;-webkit-text-stroke:0.35px #efefef;transform:scaleX(1.0150);transform-origin:0 0;">Highlight Cells Rules</div>
<svg class="a" style="left:532px;top:93px" width="12" height="14" viewBox="532 93 12 14"><path d="M533.200 95.3 L542 100.6 L533.200 105.89999999999999 Z" fill="#f6f6f6"/></svg>
<div class="t" style="left:369.41px;top:117px;line-height:16px;font-size:14.2px;color:#efefef;-webkit-text-stroke:0.35px #efefef;transform:scaleX(1.0177);transform-origin:0 0;">Top/Bottom Rules</div>
<svg class="a" style="left:532px;top:117px" width="12" height="14" viewBox="532 117 12 14"><path d="M533.200 119.3 L542 124.6 L533.200 129.9 Z" fill="#f6f6f6"/></svg>
<div class="t" style="left:368.56px;top:153px;line-height:16px;font-size:14.2px;color:#efefef;-webkit-text-stroke:0.35px #efefef;transform:scaleX(1.0051);transform-origin:0 0;">Data Bars</div>
<svg class="a" style="left:532px;top:153px" width="12" height="14" viewBox="532 153 12 14"><path d="M533.200 155.29999999999998 L542 160.6 L533.200 165.9 Z" fill="#f6f6f6"/></svg>
<div class="t" style="left:368.98px;top:177px;line-height:16px;font-size:14.2px;color:#efefef;-webkit-text-stroke:0.35px #efefef;transform:scaleX(1.0125);transform-origin:0 0;">Color Scales</div>
<svg class="a" style="left:532px;top:177px" width="12" height="14" viewBox="532 177 12 14"><path d="M533.200 179.2 L542 184.5 L533.200 189.8 Z" fill="#f6f6f6"/></svg>
<div class="t" style="left:368.39px;top:200px;line-height:16px;font-size:14.2px;color:#efefef;-webkit-text-stroke:0.35px #efefef;transform:scaleX(1.0237);transform-origin:0 0;">Icon Sets</div>
<svg class="a" style="left:532px;top:201px" width="12" height="14" viewBox="532 201 12 14"><path d="M533.200 203.0 L542 208.3 L533.200 213.60000000000002 Z" fill="#f6f6f6"/></svg>
<div class="t" style="left:368.55px;top:237px;line-height:16px;font-size:14.2px;color:#efefef;-webkit-text-stroke:0.35px #efefef;transform:scaleX(1.0113);transform-origin:0 0;">New Rule...</div>
<div class="t" style="left:369.00px;top:261px;line-height:16px;font-size:14.2px;color:#efefef;-webkit-text-stroke:0.35px #efefef;transform:scaleX(0.9837);transform-origin:0 0;">Clear Rules</div>
<svg class="a" style="left:532px;top:262px" width="12" height="14" viewBox="532 262 12 14"><path d="M533.200 263.7 L542 269 L533.200 274.3 Z" fill="#f6f6f6"/></svg>
<div class="t" style="left:368.56px;top:285px;line-height:16px;font-size:14.2px;color:#ffffff;-webkit-text-stroke:0.35px #ffffff;transform:scaleX(1.0076);transform-origin:0 0;">Manage Rules...</div>
<svg class="a" style="left:344px;top:90px" width="26" height="24" viewBox="344 90 26 24"><path d="M351.5 92.5 V107.5 M358.5 92.5 V107.5 M346.5 96.5 H363.5 M346.5 102.5 H363.5 " stroke="#e2e2e2" stroke-width="1" fill="none"/><rect x="346.5" y="92.5" width="17" height="15" fill="none" stroke="#e2e2e2" stroke-width="1"/><path d="M351.500 96.500 H359 V98.200 H353.200 V102.500 H351.500 Z" fill="#f0962e"/><rect x="353.500" y="101.500" width="11" height="8" fill="#2a2a2a" stroke="#eaeaea" stroke-width="1"/><path d="M360.800 103.200 L357.600 104.600 L360.800 106 M357.600 107.600 H360.800" stroke="#e0e0e0" stroke-width="0.800" fill="none"/></svg>
<svg class="a" style="left:344px;top:114px" width="26" height="24" viewBox="344 114 26 24"><path d="M350.5 116.5 V131.5 M359.5 116.5 V131.5 M346.5 120.5 H363.5 M346.5 126.5 H363.5 " stroke="#e2e2e2" stroke-width="1" fill="none"/><rect x="346.5" y="116.5" width="17" height="15" fill="none" stroke="#e2e2e2" stroke-width="1"/><rect x="351" y="117" width="8" height="14" fill="#f0962e"/><path d="M355 126 V119 M352.400 121.300 L355 118.500 L357.600 121.300" stroke="#ffffff" stroke-width="1.100" fill="none"/><rect x="354.500" y="125.500" width="10" height="8" fill="#2a2a2a" stroke="#eaeaea" stroke-width="1"/><path d="M357.300 127.500 V131.500" stroke="#e8e8e8" stroke-width="0.900"/><rect x="359.300" y="127.600" width="2.600" height="3.800" rx="1" fill="none" stroke="#e8e8e8" stroke-width="0.900"/></svg>
<svg class="a" style="left:344px;top:150px" width="26" height="24" viewBox="344 150 26 24"><rect x="350.500" y="153" width="5" height="4" fill="#1e6fd0" stroke="#4da3ff" stroke-width="0.800"/><rect x="350.500" y="157.800" width="1.800" height="4.800" fill="#1e6fd0" stroke="#4da3ff" stroke-width="0.700"/><rect x="350.500" y="163" width="5" height="4.300" fill="#1e6fd0" stroke="#4da3ff" stroke-width="0.800"/><path d="M350.5 152.5 V167.5 M355.5 152.5 V167.5 M359.5 152.5 V167.5 M346.5 156.5 H363.5 M346.5 162.5 H363.5 " stroke="#d0d0d0" stroke-width="1" fill="none"/><rect x="346.5" y="152.5" width="17" height="15" fill="none" stroke="#e2e2e2" stroke-width="1"/></svg>
<svg class="a" style="left:344px;top:174px" width="26" height="24" viewBox="344 174 26 24"><path d="M350.5 176.5 V191.5 M359.5 176.5 V191.5 M346.5 180.5 H363.5 M346.5 186.5 H363.5 " stroke="#e2e2e2" stroke-width="1" fill="none"/><rect x="346.5" y="176.5" width="17" height="15" fill="none" stroke="#e2e2e2" stroke-width="1"/><rect x="351" y="177" width="9" height="4.300" fill="#1660c0"/><rect x="351" y="181.300" width="9" height="5" fill="#e8902a" stroke="#ffd060" stroke-width="0.600"/><rect x="351" y="186.300" width="9" height="4.800" fill="#dc2a2a"/></svg>
<svg class="a" style="left:344px;top:198px" width="26" height="24" viewBox="344 198 26 24"><path d="M350.5 200.5 V215.5 M359.5 200.5 V215.5 M346.5 205.5 H363.5 M346.5 210.5 H363.5 " stroke="#cfcfcf" stroke-width="1" fill="none"/><rect x="346.5" y="200.5" width="17" height="15" fill="none" stroke="#e2e2e2" stroke-width="1"/><rect x="352.200" y="202.300" width="1.800" height="1.800" fill="#2b8cf0"/><rect x="352.200" y="207.300" width="1.800" height="1.800" fill="#f04040"/><rect x="352.200" y="212.300" width="1.800" height="1.800" fill="#2b8cf0"/><path d="M355.600 203 H358.200 M355.600 208.200 H358.200 M355.600 213 H358.200" stroke="#c8c8c8" stroke-width="0.900"/></svg>
<svg class="a" style="left:344px;top:234px" width="26" height="24" viewBox="344 234 26 24"><path d="M351.5 236.5 V251.5 M359.5 236.5 V251.5 M346.5 240.5 H363.5 M346.5 247.5 H363.5 " stroke="#e2e2e2" stroke-width="1" fill="none"/><rect x="346.5" y="236.5" width="17" height="15" fill="none" stroke="#e2e2e2" stroke-width="1"/><rect x="352" y="241" width="7" height="6" fill="#e8902a" stroke="#ffd070" stroke-width="0.800"/></svg>
<svg class="a" style="left:344px;top:258px" width="26" height="24" viewBox="344 258 26 24"><path d="M351.5 260.5 V275.5 M359.5 260.5 V275.5 M346.5 264.5 H363.5 M346.5 271.5 H363.5 " stroke="#e2e2e2" stroke-width="1" fill="none"/><rect x="346.5" y="260.5" width="17" height="15" fill="none" stroke="#e2e2e2" stroke-width="1"/><rect x="352" y="265" width="7" height="6" fill="#e8902a" stroke="#ffd070" stroke-width="0.800"/><g transform="rotate(-40 359.500 272.300)"><rect x="354.300" y="269.300" width="10.500" height="6" rx="0.800" fill="#2a2a2a" stroke="#c565d8" stroke-width="1.200"/><rect x="354.300" y="269.300" width="3.600" height="6" fill="#a63cc0" stroke="#c565d8" stroke-width="1"/></g></svg>
<svg class="a" style="left:345px;top:282px" width="6" height="18" viewBox="345 282 6 18"><path d="M346.500 297.500 V283.500 H362" stroke="#e0e0e0" stroke-width="1" fill="none"/></svg>
<svg class="a" style="left:345px;top:282px" width="20" height="4" viewBox="345 282 20 4"><path d="M346.500 283.500 H362" stroke="#e0e0e0" stroke-width="1" fill="none"/></svg>
<svg class="a" style="left:346px;top:283px" width="26" height="24" viewBox="346 283 26 24"><path d="M352.5 285.5 V300.0 M359.5 285.5 V300.0 M348.5 289.5 H364.0 M348.5 296 H364.0 " stroke="#9aa59e" stroke-width="1" fill="none"/><rect x="348.5" y="285.5" width="15.5" height="14.5" fill="none" stroke="#e2e2e2" stroke-width="1"/><rect x="353" y="289.800" width="6.800" height="6" fill="#e8902a" stroke="#ffd070" stroke-width="0.800"/></svg>
<div class="a" style="left:697.500px;top:0;width:1.500px;height:627px;background:#000"></div>
</div>
</body>
</html>
